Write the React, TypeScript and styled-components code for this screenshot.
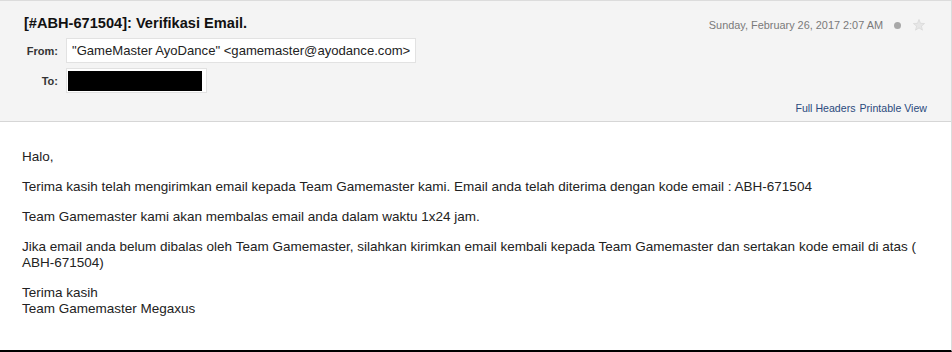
import React from "react";
import styled, { createGlobalStyle } from "styled-components";

const Global = createGlobalStyle`
  html, body { margin: 0; padding: 0; background: #fff; }
  body { font-family: Arial, "Liberation Sans", sans-serif; }
`;

const Frame = styled.div`
  width: 952px;
  height: 352px;
  box-sizing: border-box;
  border-top: 1px solid #dcdcdc;
  border-right: 1px solid #dcdcdc;
  border-bottom: 2px solid #000;
  display: flex;
  flex-direction: column;
  overflow: hidden;
`;

const Header = styled.div`
  background: #f4f4f4;
  border-bottom: 1px solid #d6d6d6;
  height: 121px;
  flex: none;
  box-sizing: border-box;
  padding: 0 24px 0 24px;
  display: flex;
  justify-content: space-between;
`;

const LeftCol = styled.div`
  display: flex;
  flex-direction: column;
`;

const Title = styled.div`
  font-size: 14.6px;
  font-weight: bold;
  color: #111;
  line-height: 18px;
  margin-top: 13px;
`;

const Fields = styled.div`
  display: grid;
  grid-template-columns: 34px auto;
  column-gap: 8px;
  row-gap: 5px;
  margin-top: 6px;
  align-items: center;
  justify-items: start;
`;

const Label = styled.div`
  font-size: 11px;
  font-weight: bold;
  color: #333;
  justify-self: end;
`;

const Box = styled.div`
  background: #fff;
  border: 1px solid #e2e2e2;
  height: 25px;
  box-sizing: border-box;
  padding: 0 5px;
  display: flex;
  align-items: center;
  font-size: 13.1px;
  color: #222;
  white-space: nowrap;
`;

const ToBox = styled(Box)`
  width: 141px;
  padding: 0 4px 0 1px;
`;

const Redacted = styled.div`
  width: 134px;
  height: 20px;
  background: #000;
`;

const RightCol = styled.div`
  display: flex;
  flex-direction: column;
  align-items: flex-end;
  justify-content: space-between;
  padding: 17px 0 7px;
`;

const Meta = styled.div`
  display: flex;
  align-items: center;
  font-size: 10.9px;
  color: #7a7a7a;
`;

const Dot = styled.span`
  width: 7px;
  height: 7px;
  border-radius: 50%;
  background: #a8a8a8;
  margin-left: 11px;
`;

const Star = styled.svg`
  width: 14px;
  height: 14px;
  margin-left: 11px;
  margin-right: 1px;
`;

const Links = styled.div`
  display: flex;
  gap: 4px;
  font-size: 10.6px;
  color: #2a4a7d;
`;

const Link = styled.span`
  cursor: pointer;
`;

const Body = styled.div`
  padding: 27px 22px 0;
  font-size: 13.5px;
  line-height: 16px;
  color: #222;
`;

const Para = styled.p`
  margin: 0 0 14px;
`;

export default function App() {
  return (
    <>
      <Global />
      <Frame>
        <Header>
          <LeftCol>
            <Title>[#ABH-671504]: Verifikasi Email.</Title>
            <Fields>
              <Label>From:</Label>
              <Box>"GameMaster AyoDance" &lt;gamemaster@ayodance.com&gt;</Box>
              <Label>To:</Label>
              <ToBox>
                <Redacted />
              </ToBox>
            </Fields>
          </LeftCol>
          <RightCol>
            <Meta>
              <span>Sunday, February 26, 2017 2:07 AM</span>
              <Dot />
              <Star viewBox="0 0 24 24">
                <path
                  d="M12 2.5l2.6 6.6 7 .4-5.4 4.5 1.8 6.9L12 17l-6 3.9 1.8-6.9-5.4-4.5 7-.4z"
                  fill="#e6e6e6"
                  stroke="#d2d2d2"
                  strokeWidth="1"
                />
              </Star>
            </Meta>
            <Links>
              <Link>Full Headers</Link>
              <Link>Printable View</Link>
            </Links>
          </RightCol>
        </Header>
        <Body>
          <Para>Halo,</Para>
          <Para>
            Terima kasih telah mengirimkan email kepada Team Gamemaster kami. Email anda telah diterima dengan kode email : ABH-671504
          </Para>
          <Para>Team Gamemaster kami akan membalas email anda dalam waktu 1x24 jam.</Para>
          <Para>
            Jika email anda belum dibalas oleh Team Gamemaster, silahkan kirimkan email kembali kepada Team Gamemaster dan sertakan kode email di atas (
            ABH-671504)
          </Para>
          <Para>
            Terima kasih
            <br />
            Team Gamemaster Megaxus
          </Para>
        </Body>
      </Frame>
    </>
  );
}
